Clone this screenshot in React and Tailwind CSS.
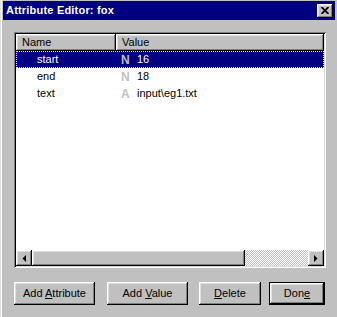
const raised =
  "shadow-[inset_-1px_-1px_#000,inset_1px_1px_#fff,inset_-2px_-2px_#808080,inset_2px_2px_#dfdfdf]";

const rows = [
  { name: "start", kind: "N", value: "16", selected: true },
  { name: "end", kind: "N", value: "18" },
  { name: "text", kind: "A", value: "input\\eg1.txt" },
];

function Btn({ width, children, isDefault }) {
  const inner = (
    <div
      className={`${raised} bg-[#c0c0c0] h-full flex items-center justify-center text-black`}
    >
      {children}
    </div>
  );
  if (isDefault) {
    return (
      <div className={`${width} h-[23px] border border-black`}>{inner}</div>
    );
  }
  return <div className={`${width} h-[23px]`}>{inner}</div>;
}

function Arrow({ dir }) {
  return (
    <div
      className={`${raised} w-[16px] h-[16px] bg-[#c0c0c0] flex items-center justify-center`}
    >
      <svg width="4" height="7" viewBox="0 0 4 7">
        {dir === "left" ? (
          <polygon points="4,0 4,7 0.5,3.5" fill="#000" />
        ) : (
          <polygon points="0,0 0,7 3.5,3.5" fill="#000" />
        )}
      </svg>
    </div>
  );
}

export default function App() {
  return (
    <div className="w-[337px] h-[317px] bg-[#c0c0c0] pt-[1px] pl-[3px] pr-[2px] font-['Liberation_Sans',Arial,sans-serif] text-[11px] shadow-[inset_1px_0_#dfdfdf,inset_2px_0_#fff]">
      {/* title bar */}
      <div className="h-[19px] bg-[#000080] flex items-center justify-between pl-[3px] pr-[2px]">
        <span className="text-white font-bold text-[11px] leading-none tracking-[0.2px]">
          Attribute Editor: fox
        </span>
        <div
          className={`${raised} w-[16px] h-[14px] bg-[#c0c0c0] flex items-center justify-center`}
        >
          <svg width="8" height="7" viewBox="0 0 8 7">
            <path d="M0.5 0 L7.5 7 M7.5 0 L0.5 7" stroke="#000" strokeWidth="1.7" />
          </svg>
        </div>
      </div>

      {/* list */}
      <div className="ml-[11px] mt-[12px] w-[312px] h-[236px] p-[2px] bg-white shadow-[inset_1px_1px_#808080,inset_-1px_-1px_#fff,inset_2px_2px_#000,inset_-2px_-2px_#dfdfdf] flex flex-col">
        <div className="flex h-[17px] shrink-0">
          <div
            className={`${raised} w-[100px] bg-[#c0c0c0] flex items-center pl-[6px] text-black`}
          >
            Name
          </div>
          <div
            className={`${raised} flex-1 bg-[#c0c0c0] flex items-center pl-[6px] text-black`}
          >
            Value
          </div>
        </div>
        <div className="flex-1">
          {rows.map((r) => (
            <div
              key={r.name}
              className={`flex h-[17px] items-center ${
                r.selected
                  ? "bg-[#000080] text-white border border-dotted border-[#ffff00]"
                  : "text-black border border-transparent"
              }`}
            >
              <div className="w-[99px] pl-[20px]">{r.name}</div>
              <div className="flex items-center">
                <span className="w-[21px] pl-[5px] font-bold text-[#c0c0c0] text-[12px]">
                  {r.kind}
                </span>
                <span>{r.value}</span>
              </div>
            </div>
          ))}
        </div>
        <div className="flex h-[16px] shrink-0">
          <Arrow dir="left" />
          <div className={`${raised} w-[213px] bg-[#c0c0c0]`} />
          <div className="flex-1 [background-image:repeating-conic-gradient(#fff_0_25%,#c0c0c0_0_50%)] [background-size:2px_2px]" />
          <Arrow dir="right" />
        </div>
      </div>

      {/* buttons */}
      <div className="flex ml-[11px] mt-[14px]">
        <Btn width="w-[81px]">
          <span>
            Add <u>A</u>ttribute
          </span>
        </Btn>
        <div className="ml-[12px]">
          <Btn width="w-[81px]">
            <span>
              Add <u>V</u>alue
            </span>
          </Btn>
        </div>
        <div className="ml-[11px]">
          <Btn width="w-[62px]">
            <span>
              <u>D</u>elete
            </span>
          </Btn>
        </div>
        <div className="ml-[8px]">
          <Btn width="w-[56px]" isDefault>
            <span>
              Don<u>e</u>
            </span>
          </Btn>
        </div>
      </div>
    </div>
  );
}
